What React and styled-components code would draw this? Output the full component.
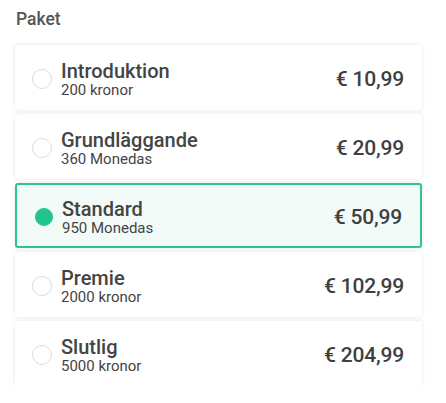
import React, { useState } from "react";
import styled, { createGlobalStyle } from "styled-components";

const Global = createGlobalStyle`
  html, body { margin: 0; padding: 0; background: #ffffff; }
  body { font-family: Roboto, "Noto Sans", "Liberation Sans", sans-serif; }
`;

const Wrapper = styled.div`
  width: 407px;
  padding: 8px 24px 0 15px;
`;

const Title = styled.div`
  font-size: 17.5px;
  font-weight: 500;
  color: #555555;
  line-height: 22px;
  padding-left: 1px;
  margin-bottom: 15px;
`;

const List = styled.div`
  display: flex;
  flex-direction: column;
  gap: 4px;
`;

const Card = styled.label`
  box-sizing: border-box;
  height: 65px;
  display: flex;
  align-items: center;
  padding: 2px 18px 0 ${(p) => (p.$selected ? 18 : 17)}px;
  background: ${(p) => (p.$selected ? "#f2fbf8" : "#ffffff")};
  border: ${(p) => (p.$selected ? "2px solid #2cc496" : "none")};
  border-radius: 3px;
  box-shadow: 0 0 4px rgba(60, 70, 120, 0.13);
  cursor: pointer;
`;

const Radio = styled.span`
  box-sizing: border-box;
  flex: none;
  width: ${(p) => (p.$selected ? 18 : 20)}px;
  height: ${(p) => (p.$selected ? 18 : 20)}px;
  border-radius: 50%;
  border: 1px solid ${(p) => (p.$selected ? "#22c38f" : "#dcdcdc")};
  background: ${(p) => (p.$selected ? "#22c38f" : "#ffffff")};
  margin-right: 9px;
`;

const Info = styled.div`
  display: flex;
  flex-direction: column;
`;

const Name = styled.div`
  font-size: 20px;
  font-weight: 500;
  color: #444444;
  line-height: 23px;
`;

const Sub = styled.div`
  font-size: 15px;
  color: #444444;
  line-height: 16px;
  margin-top: -1px;
`;

const Price = styled.div`
  margin-left: auto;
  font-size: 21px;
  font-weight: 500;
  color: #3f3f3f;
  letter-spacing: -0.2px;
`;

const packages = [
  { name: "Introduktion", sub: "200 kronor", price: "€ 10,99" },
  { name: "Grundläggande", sub: "360 Monedas", price: "€ 20,99" },
  { name: "Standard", sub: "950 Monedas", price: "€ 50,99" },
  { name: "Premie", sub: "2000 kronor", price: "€ 102,99" },
  { name: "Slutlig", sub: "5000 kronor", price: "€ 204,99" },
];

export default function App() {
  const [selected, setSelected] = useState(2);
  return (
    <>
      <Global />
      <Wrapper>
        <Title>Paket</Title>
        <List>
          {packages.map((p, i) => (
            <Card key={p.name} $selected={i === selected} onClick={() => setSelected(i)}>
              <Radio $selected={i === selected} />
              <Info>
                <Name>{p.name}</Name>
                <Sub>{p.sub}</Sub>
              </Info>
              <Price>{p.price}</Price>
            </Card>
          ))}
        </List>
      </Wrapper>
    </>
  );
}
